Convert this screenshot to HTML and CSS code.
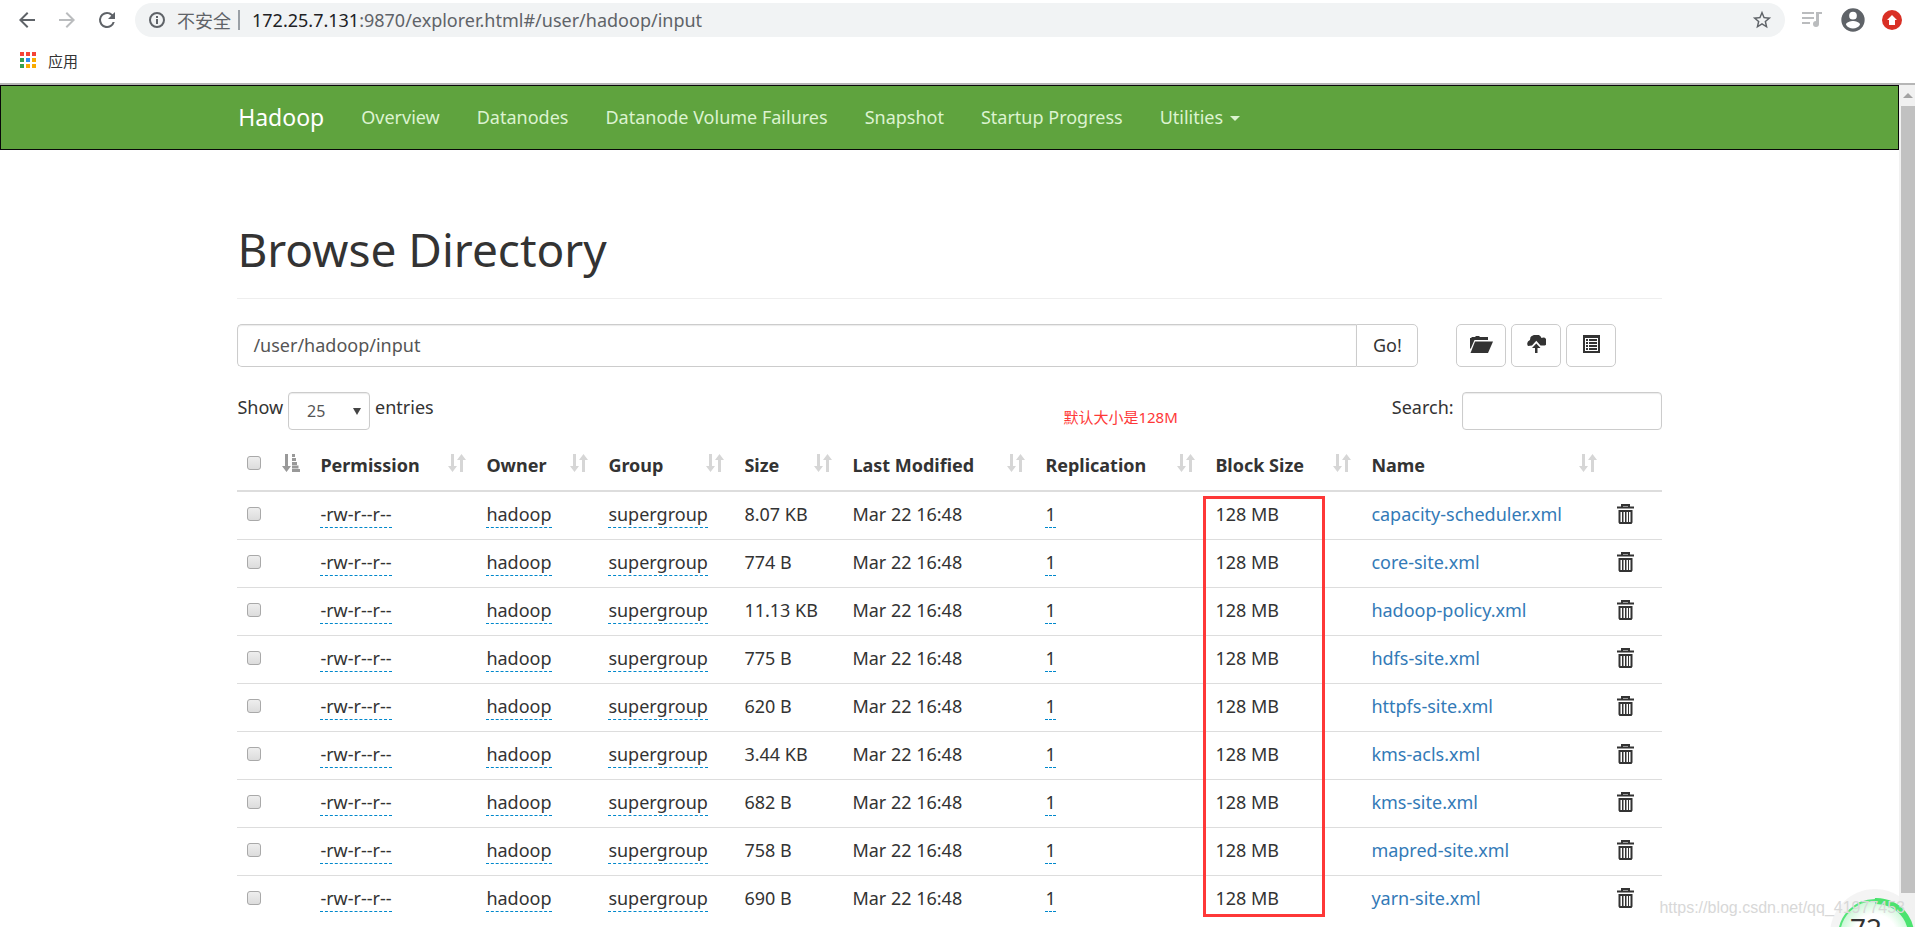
FILE: index.html
```html
<!DOCTYPE html>
<html lang="zh-CN">
<head>
<meta charset="utf-8">
<title>Browsing HDFS</title>
<link rel="stylesheet" href="styles.css">
</head>
<body>
<header class="browser">
  <div class="toolbar">
    <div class="nav-buttons">
      <button class="icon-btn" aria-label="Back"><svg width="24" height="24" viewBox="0 0 24 24" fill="#5f6368"><path d="M20 11H7.8l5.6-5.6L12 4l-8 8 8 8 1.4-1.4L7.8 13H20v-2z"/></svg></button>
      <button class="icon-btn" aria-label="Forward"><svg width="24" height="24" viewBox="0 0 24 24" fill="#babcbe"><path d="M4 11h12.200l-5.600-5.600L12 4l8 8-8 8-1.400-1.400 5.600-5.600H4v-2z"/></svg></button>
      <button class="icon-btn" aria-label="Reload"><svg width="24" height="24" viewBox="0 0 24 24" fill="#5f6368"><path d="M17.650 6.350A7.950 7.950 0 0 0 12 4a8 8 0 1 0 7.730 10h-2.080A6 6 0 1 1 12 6c1.660 0 3.140.690 4.220 1.780L13 11h7V4l-2.350 2.350z"/></svg></button>
    </div>
    <div class="omnibox">
      <svg width="20" height="20" viewBox="0 0 20 20"><circle cx="10" cy="10" r="7" fill="none" stroke="#5f6368" stroke-width="2"/><path d="M9 9h2v5H9zM9 6h2v2H9z" fill="#5f6368"/></svg>
      <span class="insecure">不安全</span>
      <span class="divider"></span>
      <span class="url"><b>172.25.7.131</b>:9870/explorer.html#/user/hadoop/input</span>
      <button class="icon-btn star" aria-label="Bookmark"><svg width="22" height="22" viewBox="0 0 24 24" fill="#5f6368"><path d="M22 9.240l-7.190-.620L12 2 9.190 8.630 2 9.240l5.460 4.730L5.820 21 12 17.270 18.180 21l-1.630-7.030L22 9.240zM12 15.400l-3.760 2.270 1-4.280-3.320-2.880 4.380-.380L12 6.100l1.710 4.040 4.380.380-3.320 2.880 1 4.280L12 15.400z"/></svg></button>
    </div>
    <div class="actions">
      <button class="icon-btn" aria-label="Media"><svg width="24" height="24" viewBox="0 0 24 24" fill="#babcbe"><path d="M2 4h12v2H2zM2 9h12v2H2zM2 14h8v2H2zM16 4h6v2h-3v10a3 3 0 1 1-3-3z"/></svg></button>
      <button class="icon-btn" aria-label="Profile"><svg width="28" height="28" viewBox="0 0 24 24" fill="#5f6368"><path d="M12 2a10 10 0 1 0 0 20 10 10 0 0 0 0-20zm0 3a3.300 3.300 0 1 1 0 6.600A3.300 3.300 0 0 1 12 5zm0 14.200a7.200 7.200 0 0 1-6-3.220c.030-1.990 4-3.080 6-3.080s5.970 1.090 6 3.080a7.200 7.200 0 0 1-6 3.220z"/></svg></button>
      <button class="icon-btn" aria-label="Update"><svg width="20" height="20" viewBox="0 0 20 20"><circle cx="10" cy="10" r="10" fill="#d93025"/><path d="M10 5l5 5h-2v5H7v-5H5z" fill="#fff"/></svg></button>
    </div>
  </div>
  <div class="bookmarks">
    <svg width="16" height="17" viewBox="0 0 16 17"><path fill="#f44336" d="M0 0h4v4H0zM6 0h4v4H6zM12 0h4v4h-4z"/><path fill="#34a050" d="M0 6h4v4H0zM0 12h4v4H0z"/><path fill="#2a8cf0" d="M6 6h4v4H6z"/><path fill="#f9ab00" d="M12 6h4v4h-4zM6 12h4v4H6zM12 12h4v4h-4z"/></svg>
    <span>应用</span>
  </div>
</header>

<div class="viewport">
  <div class="page">
    <nav class="navbar">
      <div class="container navlist">
        <a class="brand" href="#">Hadoop</a>
        <a href="#">Overview</a>
        <a href="#">Datanodes</a>
        <a href="#">Datanode Volume Failures</a>
        <a href="#">Snapshot</a>
        <a href="#">Startup Progress</a>
        <a href="#">Utilities <span class="caret"></span></a>
      </div>
    </nav>

    <main class="container">
      <h1>Browse Directory</h1>
      <div class="pathbar">
        <div class="path-group">
          <input type="text" aria-label="Directory" value="/user/hadoop/input"><button>Go!</button>
        </div>
        <div class="tools">
          <button aria-label="Create directory"><svg width="23" height="18" viewBox="0 0 23 18" fill="#333"><path d="M0 14V3h1l1-1h3l1-1h3l1 1h8v3H4.500L1 13z"/><path d="M5 6.500H23L18 18H0.500z"/></svg></button>
          <button aria-label="Upload files"><svg width="19" height="18" viewBox="0 0 19 18" fill="#333"><path d="M1 11a3.800 3.800 0 0 1 1.200-5.600C3 5 3 5 3.200 4A3.500 3.500 0 0 1 6 .5 5.500 5.500 0 0 1 14.500 3 3.800 3.800 0 0 1 17.500 10.500h-4L9.300 5.800 5 10.500z"/><path d="M9.300 8.500l4.200 4.500h-3v5H8v-5H5z"/></svg></button>
          <button aria-label="Cut and paste"><svg width="17" height="18" viewBox="0 0 17 18" fill="#333"><path fill-rule="evenodd" d="M0 0h17v18H0zM2 3v13h13V3z"/><path d="M3 4h2v2H3zM6 4h8v2H6zM3 7h2v2H3zM6 7h8v2H6zM3 10h2v2H3zM6 10h8v2H6zM3 13h2v2H3zM6 13h8v2H6z"/></svg></button>
        </div>
      </div>

      <div class="filters">
        <label>Show <span class="select"><select><option>25</option></select></span> entries</label>
        <label class="search">Search: <input type="search"></label>
        <span class="note">默认大小是128M</span>
      </div>

      <table>
        <colgroup><col class="c-check"><col class="c-perm"><col class="c-owner"><col class="c-group"><col class="c-size"><col class="c-mod"><col class="c-rep"><col class="c-block"><col class="c-name"><col class="c-trash"></colgroup>
        <thead><tr id="head"></tr></thead>
        <tbody id="rows"></tbody>
      </table>
    </main>
  </div>
  <div class="scrollbar"><span class="up"></span><span class="thumb"></span></div>
</div>

<div class="gauge">
  <svg width="92" height="92" viewBox="0 0 92 92">
    <defs><radialGradient id="glow"><stop offset=".6" stop-color="#fff"/><stop offset="1" stop-color="#c8f7d4"/></radialGradient></defs>
    <circle cx="46" cy="46" r="45" fill="#f1f1f1" opacity=".8"/>
    <circle cx="46" cy="48" r="36" fill="url(#glow)" stroke="#55e57a" stroke-width="2"/>
    <path d="M46 13a35 35 0 0 1 33 50" fill="none" stroke="#4be36f" stroke-width="6"/>
  </svg>
  <span>72</span>
</div>
<div class="watermark">https://blog.csdn.net/qq_41977453</div>
<script src="script.js"></script>
</body>
</html>
```

FILE: styles.css
```css
* { box-sizing: border-box; }
body {
  margin: 0;
  height: 100vh;
  overflow: hidden;
  display: flex;
  flex-direction: column;
  position: relative;
  background: #fff;
  color: #333;
  font: 18px/26px "Noto Sans", "Noto Sans CJK SC", sans-serif;
}
button, input, select { font: inherit; color: inherit; }
a { color: #337ab7; text-decoration: none; }
svg { display: block; }

.browser { border-bottom: 2px solid #b6b6b6; flex: none; }
.toolbar { display: flex; align-items: center; height: 40px; padding: 0 13px 0 15px; }
.nav-buttons { display: flex; gap: 16px; margin-right: 16px; }
.icon-btn { border: 0; padding: 0; background: none; }
.omnibox {
  flex: 1;
  display: flex;
  align-items: center;
  height: 34px;
  padding: 0 12px;
  border-radius: 17px;
  background: #f1f3f4;
  color: #5f6368;
}
.insecure { margin-left: 10px; font: 18px/24px "Noto Sans CJK SC", sans-serif; }
.divider { width: 2px; height: 20px; margin: 0 12px 0 7px; background: #9aa0a6; }
.url b { font-weight: 400; color: #202124; }
.star { margin-left: auto; }
.actions { display: flex; align-items: center; gap: 15px; margin-left: 15px; }
.bookmarks {
  display: flex;
  align-items: center;
  gap: 12px;
  height: 43px;
  padding: 0 20px 2px;
  font: 15px/20px "Noto Sans CJK SC", sans-serif;
}

.viewport { flex: 1; min-height: 0; display: flex; }
.page { flex: 1; min-width: 0; overflow: hidden; }
.container { width: 75%; margin: 0 auto; }
.navbar { border: 1px solid #080808; background: #5fa33e; }
.navlist { display: flex; align-items: center; gap: 37px; height: 63px; padding-bottom: 2px; }
.navlist a { color: #dcf3d0; white-space: nowrap; }
.navlist .brand { color: #fff; font-size: 23px; }
.caret {
  display: inline-block;
  margin-left: 2px;
  vertical-align: middle;
  border: 5px solid transparent;
  border-top-color: currentColor;
  border-bottom: 0;
}

h1 {
  margin: 65px 0 25px;
  padding-bottom: 15px;
  border-bottom: 1px solid #eee;
  font-size: 46px;
  line-height: 68px;
  font-weight: 400;
}
.pathbar { display: flex; gap: 38px; margin-bottom: 25px; }
.path-group { flex: 0 1 1181px; display: flex; }
.pathbar button, .pathbar input {
  height: 43px;
  border: 1px solid #ccc;
  border-radius: 5px;
  background: #fff;
}
.path-group input {
  flex: 1;
  min-width: 0;
  padding: 0 15px 2px;
  border-radius: 5px 0 0 5px;
  border-right: 0;
  color: #555;
  box-shadow: inset 0 1px 1px rgba(0,0,0,.08);
}
.path-group button { width: 62px; border-radius: 0 5px 5px 0; padding: 0 0 2px; }
.tools { display: flex; gap: 5px; }
.tools button { width: 50px; padding: 0 0 4px; display: grid; place-items: center; }

.filters { position: relative; display: flex; justify-content: space-between; height: 38px; margin-bottom: 10px; }
.filters label { display: flex; gap: 5px; line-height: 31px; }
.filters .search { gap: 8px; }
.filters select, .filters input {
  display: block;
  height: 38px;
  border: 1px solid #ccc;
  border-radius: 4px;
  background: #fff;
  box-shadow: inset 0 1px 1px rgba(0,0,0,.08);
}
.filters select {
  appearance: none;
  width: 82px;
  padding: 0 18px;
  font-size: 16px;
  color: #555;
}
.select { position: relative; height: 38px; }
.select::after {
  content: "";
  position: absolute;
  right: 9px;
  top: 16px;
  border: 4px solid transparent;
  border-top: 7px solid #444;
  border-bottom: 0;
  pointer-events: none;
}
.filters input { width: 200px; }
.note { position: absolute; left: 58%; top: 15px; font-size: 15px; line-height: 20px; color: #fe3838; }

table { width: 100%; table-layout: fixed; border-collapse: collapse; }
.c-check { width: 73px; } .c-perm { width: 166px; } .c-owner { width: 122px; }
.c-group { width: 136px; } .c-size { width: 108px; } .c-mod { width: 193px; }
.c-rep { width: 170px; } .c-block { width: 156px; } .c-name { width: 246px; } .c-trash { width: 55px; }
th, td { padding: 0 10px; text-align: left; white-space: nowrap; }
th { height: 51px; border-bottom: 2px solid #ddd; }
td { position: relative; height: 48px; padding-bottom: 2px; border-top: 1px solid #ddd; }
.th { display: flex; justify-content: space-between; align-items: flex-start; height: 26px; }
.th svg { margin-top: 1px; }
.th .check { margin-top: 4px; }
.check {
  appearance: none;
  display: block;
  width: 14px;
  height: 14px;
  margin: 0;
  border: 1px solid #a9a9a9;
  border-radius: 3px;
  background: linear-gradient(#eee, #dcdcdc);
}
.edit { display: inline-block; border-bottom: 1px dashed #08c; }
.trash { display: block; border: 0; padding: 0; background: none; }
.highlight { position: absolute; left: -2px; top: 4px; width: 122px; height: 421px; border: 3px solid #fe3838; pointer-events: none; }

.scrollbar { flex: none; width: 16px; display: flex; flex-direction: column; padding-left: 2px; background: #f1f1f1; }
.up { height: 21px; display: grid; place-items: center; }
.up::before { content: ""; border: 5px solid transparent; border-bottom-color: #a3a3a3; border-top: 0; }
.thumb { height: 787px; background: #c1c1c1; }

.gauge { position: absolute; right: 0; bottom: 0; width: 86px; height: 39px; overflow: hidden; }
.gauge span { position: absolute; left: 21px; top: 25px; font-size: 28px; line-height: 30px; }
.watermark { position: absolute; right: 10px; bottom: 9px; font: 16px/20px "Liberation Sans", sans-serif; color: #d8d8d8; }
```

FILE: script.js
```js
const sortIcon = '<svg width="18" height="20" viewBox="0 0 18 20" fill="#d6d6d6"><path d="M3 1h3v12h3l-4.500 6L0 13h3zM12 19h3V7h3l-4.500-6L9 7h3z"/></svg>';
const sortedIcon = '<svg width="18" height="20" viewBox="0 0 18 20" fill="#999"><path d="M3 1h3v12h3l-4.500 6L0 13h3zM10 1h3v3h-3zM10 5h4v3h-4zM10 9h5v3h-5zM10 12.500h6.500v3H10zM10 16h8v3h-8z"/></svg>';
const trashIcon = '<svg width="17" height="20" viewBox="0 0 17 20"><path d="M0 3.500h17M5 3V1h7v2" fill="none" stroke="#333" stroke-width="2"/><path fill-rule="evenodd" fill="#333" d="M1.500 6h14v12.500l-1 1.500h-12l-1-1.500zM3.500 8v10h1.500V8zM6.500 8v10H8V8zM9.500 8v10H11V8zM12 8v10h1.500V8z"/></svg>';
const heads = ['Permission', 'Owner', 'Group', 'Size', 'Last Modified', 'Replication', 'Block Size', 'Name'];
const files = [
  ['8.07 KB', 'capacity-scheduler.xml'], ['774 B', 'core-site.xml'], ['11.13 KB', 'hadoop-policy.xml'],
  ['775 B', 'hdfs-site.xml'], ['620 B', 'httpfs-site.xml'], ['3.44 KB', 'kms-acls.xml'],
  ['682 B', 'kms-site.xml'], ['758 B', 'mapred-site.xml'], ['690 B', 'yarn-site.xml']
];
const edit = t => `<td><span class="edit">${t}</span></td>`;
document.getElementById('head').innerHTML =
  `<th><div class="th"><input type="checkbox" class="check" aria-label="Select all">${sortedIcon}</div></th>` +
  heads.map(h => `<th><div class="th"><span>${h}</span>${sortIcon}</div></th>`).join('') + '<th></th>';
document.getElementById('rows').innerHTML = files.map(([size, name], i) =>
  `<tr><td><input type="checkbox" class="check" aria-label="Select ${name}"></td>` +
  edit('-rw-r--r--') + edit('hadoop') + edit('supergroup') +
  `<td>${size}</td><td>Mar 22 16:48</td>` + edit('1') +
  `<td>128 MB${i === 0 ? '<span class="highlight"></span>' : ''}</td>` +
  `<td><a href="#">${name}</a></td><td><button class="trash" aria-label="Delete ${name}">${trashIcon}</button></td></tr>`
).join('');
```
